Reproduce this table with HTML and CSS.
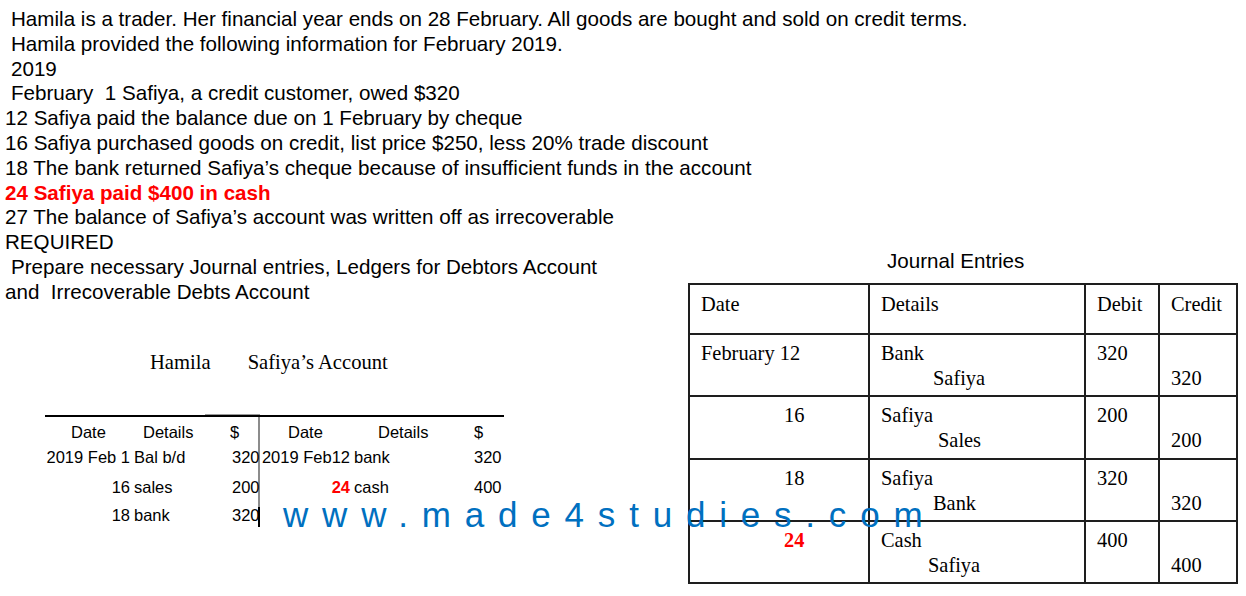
FILE: index.html
```html
<!DOCTYPE html>
<html lang="en">
<head>
<meta charset="utf-8">
<title>Safiya's Account</title>
<link rel="stylesheet" href="styles.css">
</head>
<body>
<div class="page">
  <div class="left">
    <div class="intro">
      <div class="ln ind">Hamila is a trader. Her financial year ends on 28 February. All goods are bought and sold on credit terms.</div>
      <div class="ln ind">Hamila provided the following information for February 2019.</div>
      <div class="ln ind">2019</div>
      <div class="ln ind">February&nbsp; 1 Safiya, a credit customer, owed $320</div>
      <div class="ln">12 Safiya paid the balance due on 1 February by cheque</div>
      <div class="ln">16 Safiya purchased goods on credit, list price $250, less 20% trade discount</div>
      <div class="ln">18 The bank returned Safiya’s cheque because of insufficient funds in the account</div>
      <div class="ln red">24 Safiya paid $400 in cash</div>
      <div class="ln">27 The balance of Safiya’s account was written off as irrecoverable</div>
      <div class="ln">REQUIRED</div>
      <div class="ln ind">Prepare necessary Journal entries, Ledgers for Debtors Account</div>
      <div class="ln">and&nbsp; Irrecoverable Debts Account</div>
    </div>

    <div class="ledger">
      <div class="ledger-title">
        <span>Hamila</span>
        <span>Safiya’s Account</span>
      </div>
      <div class="taccount">
        <div class="side side-dr">
          <div class="hd h-date">Date</div>
          <div class="hd h-det">Details</div>
          <div class="hd h-amt">$</div>

          <div class="c-date">2019 Feb 1</div>
          <div class="c-det">Bal b/d</div>
          <div class="c-amt">320</div>

          <div class="c-date">16</div>
          <div class="c-det">sales</div>
          <div class="c-amt">200</div>

          <div class="c-date">18</div>
          <div class="c-det">bank</div>
          <div class="c-amt">320</div>
        </div>
        <div class="side side-cr">
          <div class="hd h-date">Date</div>
          <div class="hd h-det">Details</div>
          <div class="hd h-amt">$</div>

          <div class="c-date">2019 Feb12</div>
          <div class="c-det">bank</div>
          <div class="c-amt">320</div>

          <div class="c-date"><b class="hl">24</b></div>
          <div class="c-det">cash</div>
          <div class="c-amt">400</div>

          <div class="c-date"></div>
          <div class="c-det"></div>
          <div class="c-amt"></div>
        </div>
      </div>
    </div>
  </div>

  <div class="right">
    <div class="journal-title">Journal Entries</div>
    <table class="journal">
      <colgroup>
        <col class="w-date">
        <col class="w-det">
        <col class="w-dr">
        <col class="w-cr">
      </colgroup>
      <thead>
        <tr class="head-row">
          <th>Date</th>
          <th>Details</th>
          <th>Debit</th>
          <th>Credit</th>
        </tr>
      </thead>
      <tbody>
        <tr>
          <td>February 12</td>
          <td><div>Bank</div><div class="sub i52">Safiya</div></td>
          <td>320</td>
          <td><div>&nbsp;</div><div>320</div></td>
        </tr>
        <tr>
          <td class="day">16</td>
          <td><div>Safiya</div><div class="sub i57">Sales</div></td>
          <td>200</td>
          <td><div>&nbsp;</div><div>200</div></td>
        </tr>
        <tr>
          <td class="day">18</td>
          <td><div>Safiya</div><div class="sub i52">Bank</div></td>
          <td>320</td>
          <td><div>&nbsp;</div><div>320</div></td>
        </tr>
        <tr>
          <td class="day"><b class="hl">24</b></td>
          <td><div>Cash</div><div class="sub i47">Safiya</div></td>
          <td>400</td>
          <td><div>&nbsp;</div><div>400</div></td>
        </tr>
      </tbody>
    </table>
  </div>

  <div class="watermark">www.made4studies.com</div>
</div>
</body>
</html>
```

FILE: styles.css
```css
html, body {
  margin: 0;
  padding: 0;
  background: #ffffff;
}

.page {
  position: relative;
  display: flex;
  width: 1246px;
  height: 596px;
  overflow: hidden;
  color: #000;
}

.left {
  flex: none;
  width: 688px;
}

.right {
  flex: none;
  width: 552px;
  padding-top: 249px;
}

/* Intro text */
.intro {
  padding-top: 7px;
  font-family: "Liberation Sans", Arial, sans-serif;
  font-size: 20.6px;
  line-height: 24.8px;
}

.ln {
  white-space: nowrap;
  padding-left: 5px;
}

.ln.ind {
  padding-left: 11px;
}

.ln.red {
  color: #ff0000;
  font-weight: bold;
}

/* Ledger */
.ledger-title {
  margin-top: 45.5px;
  padding-left: 150px;
  display: flex;
  gap: 37px;
  font-family: "Liberation Serif", "Times New Roman", serif;
  font-size: 20.6px;
  line-height: 24px;
}

.taccount {
  margin-top: 41px;
  margin-left: 45px;
  width: 459px;
  border-top: 2px solid #000;
  display: flex;
  font-family: "Liberation Sans", Arial, sans-serif;
  font-size: 16.5px;
  line-height: 20px;
  white-space: nowrap;
}

.side {
  display: grid;
  grid-template-rows: 24.7px 30.3px 27.7px 20px;
  padding-top: 5px;
  padding-bottom: 2px;
  column-gap: 4px;
}

.side-dr {
  position: relative;
  width: 213px;
  grid-template-columns: 85px 94px 26px;
  border-right: 2px solid #8c8c8c;
}

.side-dr::before {
  content: "";
  position: absolute;
  top: -3px;
  left: 160px;
  width: 55px;
  height: 1px;
  background: #9a9a9a;
}

.side-dr::after {
  content: "";
  position: absolute;
  right: -2px;
  bottom: 0;
  width: 2px;
  height: 20px;
  background: #000;
}

.side-cr {
  flex: 1;
  grid-template-columns: 89px 116px 1fr;
  padding-left: 1px;
}

.c-date {
  text-align: right;
}

.c-det,
.c-amt,
.hd {
  text-align: left;
}

.side-dr .h-date { padding-left: 26px; }
.side-dr .h-det { padding-left: 9px; }
.side-dr .h-amt { margin-left: -2px; }

.side-cr .h-date { padding-left: 27px; }
.side-cr .h-det { padding-left: 24px; }

.hl {
  color: #ff0000;
  font-weight: bold;
}

/* Journal */
.journal-title {
  padding-left: 199px;
  font-family: "Liberation Sans", Arial, sans-serif;
  font-size: 20.6px;
  line-height: 24.8px;
  margin-bottom: 9.5px;
}

.journal {
  border-collapse: collapse;
  table-layout: fixed;
  width: 548px;
  font-family: "Liberation Serif", "Times New Roman", serif;
  font-size: 20.4px;
  line-height: 25px;
  border: 2px solid #1e1e1e;
}

.w-date { width: 180px; }
.w-det { width: 216px; }
.w-dr { width: 74px; }
.w-cr { width: 78px; }

.journal th,
.journal td {
  border: 2px solid #1e1e1e;
  padding: 6px 0 0 11px;
  vertical-align: top;
  text-align: left;
  font-weight: normal;
  white-space: nowrap;
}

.journal th {
  padding-top: 7px;
}

.head-row {
  height: 50px;
}

.journal tbody tr {
  height: 62.2px;
}

.journal td.day {
  padding-left: 94px;
}

.sub.i52 { padding-left: 52px; }
.sub.i57 { padding-left: 57px; }
.sub.i47 { padding-left: 47px; }

/* Watermark overlay */
.watermark {
  position: absolute;
  left: 283px;
  top: 497px;
  font-family: "Liberation Sans", Arial, sans-serif;
  font-size: 35px;
  line-height: 35px;
  letter-spacing: 13.8px;
  color: #0070c0;
  white-space: nowrap;
  z-index: 2;
}
```
